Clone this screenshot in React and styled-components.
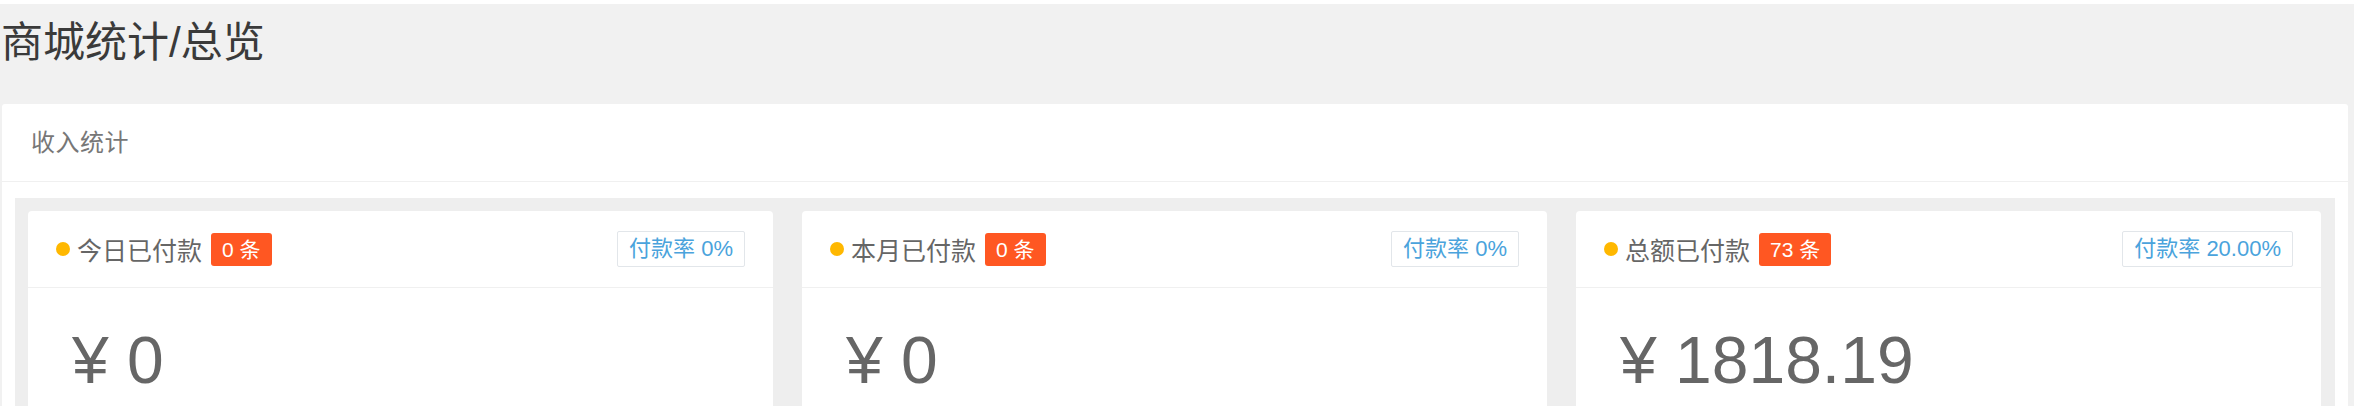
import styled, { createGlobalStyle } from 'styled-components';

const GlobalStyle = createGlobalStyle`
  body {
    margin: 0;
    background: #fff;
    font-family: "Liberation Sans", "Noto Sans CJK SC", sans-serif;
  }
`

const Page = styled.div`
  margin-top: 4px;
  background: #f1f1f1;
  min-height: 402px;
  overflow: hidden;
`

const Title = styled.h1`
  margin: 0 0 31px 0;
  padding: 9px 0 0 1px;
  font-size: 42px;
  line-height: 60px;
  font-weight: normal;
  color: #3a3a3a;
`

const Panel = styled.div`
  margin: 0 6px 0 2px;
  background: #fff;
  border-radius: 3px;
`

const PanelHeader = styled.div`
  height: 77px;
  line-height: 77px;
  padding-left: 29px;
  font-size: 24px;
  letter-spacing: 0.5px;
  color: #777;
  border-bottom: 1px solid #f0f0f0;
`

const PanelBody = styled.div`
  padding: 16px 13px 0 13px;
`

const CardArea = styled.div`
  background: #eee;
  padding: 13px 14px 0 13px;
  display: grid;
  grid-template-columns: repeat(3, 1fr);
  gap: 29px;
`

const Card = styled.div`
  background: #fff;
  border-radius: 4px 4px 0 0;
`

const CardHeader = styled.div`
  height: 76px;
  padding: 0 28px;
  display: flex;
  align-items: center;
  justify-content: space-between;
  border-bottom: 1px solid #f0f0f0;
`

const Label = styled.div`
  display: flex;
  align-items: center;
  font-size: 25px;
  color: #666;
`

const Dot = styled.span`
  width: 14px;
  height: 14px;
  border-radius: 50%;
  background: #ffb800;
  margin-right: 7px;
`

const Badge = styled.span`
  margin-left: 9px;
  height: 33px;
  line-height: 33px;
  padding: 0 11px;
  border-radius: 3px;
  background: #ff5722;
  color: #fff;
  font-size: 21px;
`

const Rate = styled.span`
  height: 34px;
  line-height: 34px;
  padding: 0 11px;
  border: 1px solid #e2e6ea;
  border-radius: 2px;
  color: #4aa3dc;
  font-size: 22px;
`

const CardBody = styled.div`
  padding: 35px 44px 60px;
  height: 120px;
`

const Amount = styled.div`
  font-size: 66px;
  line-height: 74px;
  color: #666;
`

const stats = [
  { label: '今日已付款', count: 0, rate: '0%', amount: '0' },
  { label: '本月已付款', count: 0, rate: '0%', amount: '0' },
  { label: '总额已付款', count: 73, rate: '20.00%', amount: '1818.19' },
];

export default function App() {
  return (
    <>
      <GlobalStyle />
      <Page>
        <Title>商城统计/总览</Title>
        <Panel>
          <PanelHeader>收入统计</PanelHeader>
          <PanelBody>
            <CardArea>
              {stats.map((s) => (
                <Card key={s.label}>
                  <CardHeader>
                    <Label>
                      <Dot />
                      {s.label}
                      <Badge>{s.count} 条</Badge>
                    </Label>
                    <Rate>付款率 {s.rate}</Rate>
                  </CardHeader>
                  <CardBody>
                    <Amount>¥ {s.amount}</Amount>
                  </CardBody>
                </Card>
              ))}
            </CardArea>
          </PanelBody>
        </Panel>
      </Page>
    </>
  );
}
